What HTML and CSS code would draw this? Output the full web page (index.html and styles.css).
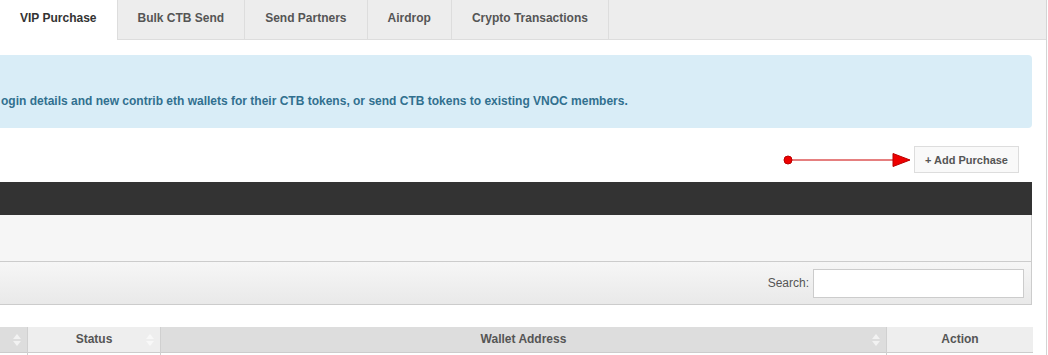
FILE: index.html
```html
<!DOCTYPE html>
<html lang="en">
<head>
  <title>VIP Purchase</title>
  <link rel="stylesheet" href="styles.css">
</head>
<body>
  <div id="page">
    <ul class="tabs">
      <li class="tab active">VIP Purchase</li>
      <li class="tab">Bulk CTB Send</li>
      <li class="tab">Send Partners</li>
      <li class="tab">Airdrop</li>
      <li class="tab">Crypto Transactions</li>
    </ul>

    <div class="content">
      <div class="alert">ogin details and new contrib eth wallets for their CTB tokens, or send CTB tokens to existing VNOC members.</div>

      <div class="toolbar">
        <svg class="pointer" width="130" height="16" viewBox="0 0 130 16">
          <circle cx="5" cy="8" r="4" fill="#e00" stroke="#b00" stroke-width="1"/>
          <line x1="8" y1="8" x2="112" y2="8" stroke="#c00" stroke-width="1"/>
          <polygon points="110,1.5 127,8 110,14.5" fill="#e00" stroke="#b00" stroke-width="1"/>
        </svg>
        <button class="btn-add">+ Add Purchase</button>
      </div>

      <div class="panel">
        <div class="panel-head"></div>
        <div class="panel-body"></div>
        <div class="search-bar">
          <label for="search">Search:</label>
          <input type="text" id="search">
        </div>
      </div>

      <div class="grid">
        <div class="th sorted col-check"><span class="sort"></span></div>
        <div class="th col-status">Status<span class="sort"></span></div>
        <div class="th sorted col-wallet">Wallet Address<span class="sort"></span></div>
        <div class="th col-action">Action</div>
        <div class="td"></div>
        <div class="td"></div>
        <div class="td"></div>
        <div class="td"></div>
      </div>
    </div>
  </div>
</body>
</html>
```

FILE: styles.css
```css
body,
html {
  margin: 0;
  padding: 0;
  background: #ffffff;
  font-family: "Liberation Sans", Arial, sans-serif;
  font-size: 12px;
  color: #555555;
}

#page {
  width: 1046px;
  height: 355px;
  border-right: 1px solid #d4d4d4;
  overflow: hidden;
}

/* Tabs */

.tabs {
  display: flex;
  list-style: none;
  margin: 0;
  padding: 0;
  height: 39px;
  background-color: #ededed;
  border-bottom: 1px solid #dddddd;
}

.tab {
  padding: 0 20px;
  line-height: 37px;
  font-weight: bold;
  color: #555555;
  border-right: 1px solid #dddddd;
  white-space: nowrap;
}

.tab.active {
  background-color: #ffffff;
  color: #333333;
  height: 40px;
}

.content {
  width: 1032px;
  padding-top: 15px;
}

/* Info alert */

.alert {
  background-color: #d9edf7;
  color: #31708f;
  font-weight: bold;
  line-height: 17px;
  padding: 38px 15px 18px 1px;
  border-radius: 0 4px 4px 0;
  white-space: nowrap;
}

/* Add button row */

.toolbar {
  display: flex;
  justify-content: flex-end;
  align-items: center;
  margin-top: 18px;
  margin-right: 13px;
}

.pointer {
  display: block;
  margin-right: 1px;
  margin-top: 1px;
}

.btn-add {
  height: 27px;
  padding: 0 10px;
  background-color: #f9f9f9;
  border: 1px solid #dddddd;
  font-family: "Liberation Sans", Arial, sans-serif;
  font-size: 11px;
  font-weight: bold;
  color: #555555;
}

/* Panel */

.panel {
  margin-top: 9px;
}

.panel-head {
  height: 33px;
  background-color: #333333;
}

.panel-body {
  height: 46px;
  background-color: #f6f6f6;
  border-bottom: 1px solid #cccccc;
  border-right: 1px solid #cccccc;
}

.search-bar {
  display: flex;
  justify-content: flex-end;
  align-items: center;
  height: 42px;
  padding-right: 7px;
  background: linear-gradient(to bottom, #f6f6f6, #e9e9e9);
  border-bottom: 1px solid #cccccc;
  border-right: 1px solid #cccccc;
}

.search-bar label {
  color: #555555;
  margin-right: 4px;
}

.search-bar input {
  width: 209px;
  height: 27px;
  padding: 0;
  border: 1px solid #cccccc;
  background: #ffffff;
}

/* Table header */

.grid {
  display: grid;
  grid-template-columns: 27px 132px 725px 146px;
  column-gap: 1px;
  background-color: #d0d0d0;
  margin-top: 22px;
}

.th {
  position: relative;
  height: 25px;
  line-height: 25px;
  text-align: center;
  font-weight: bold;
  color: #555555;
  background-color: #eeeeee;
  border-bottom: 1px solid #cccccc;
}

.th.sorted {
  background-color: #dddddd;
}

.td {
  height: 10px;
  background-color: #ffffff;
}

.sort {
  position: absolute;
  right: 5px;
  top: 7px;
  width: 10px;
  height: 12px;
}

.sort::before,
.sort::after {
  content: "";
  position: absolute;
  left: 1px;
  border-left: 4px solid transparent;
  border-right: 4px solid transparent;
}

.sort::before {
  top: 0;
  border-bottom: 5px solid #f2f2f2;
}

.sort::after {
  bottom: 0;
  border-top: 5px solid #f2f2f2;
}

.col-status .sort::before {
  border-bottom-color: #f8f8f8;
}

.col-status .sort::after {
  border-top-color: #f8f8f8;
}
```
